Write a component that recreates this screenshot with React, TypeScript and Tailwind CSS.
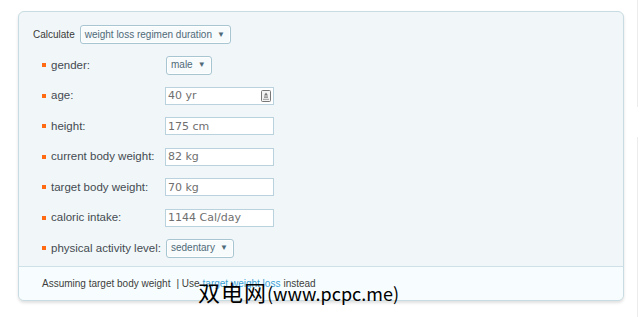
import { ReactNode } from "react";

const rows: { label: string; field: ReactNode }[] = [
  { label: "gender:", field: <Select value="male" /> },
  { label: "age:", field: <Input value="40 yr" spinner /> },
  { label: "height:", field: <Input value="175 cm" /> },
  { label: "current body weight:", field: <Input value="82 kg" /> },
  { label: "target body weight:", field: <Input value="70 kg" /> },
  { label: "caloric intake:", field: <Input value="1144 Cal/day" /> },
  { label: "physical activity level:", field: <Select value="sedentary" /> },
];

function Select({ value }: { value: string }) {
  return (
    <div className="ml-[1px] inline-flex h-[19px] items-center gap-[5px] rounded-[3px] border border-[#a8c5d2] bg-[#f8fbfc] pl-[4px] pr-[5px] text-[10px] leading-none text-[#4f6a78] shadow-[inset_0_0_0_1px_#ffffff]">
      <span>{value}</span>
      <span className="text-[8px] text-[#4f6a78]">▼</span>
    </div>
  );
}

function Input({ value, spinner }: { value: string; spinner?: boolean }) {
  return (
    <div className="flex h-[18px] w-[109px] items-center justify-between border border-[#b9d2dd] bg-white pl-[2px] pr-[2px] font-['DejaVu_Sans',sans-serif] text-[11px] leading-none text-[#6f6f6f]">
      <span>{value}</span>
      {spinner && (
        <svg width="10" height="12" viewBox="0 0 10 12">
          <rect x="0.5" y="0.5" width="9" height="11" rx="1" fill="#f3f3f3" stroke="#777" />
          <path d="M5 2.5 L7 5.5 H3 Z" fill="#777" />
          <rect x="3" y="6.5" width="4" height="1.2" fill="#777" />
          <rect x="2" y="8.8" width="6" height="1" fill="#999" />
        </svg>
      )}
    </div>
  );
}

export default function App() {
  return (
    <div className="relative flex h-[317px] w-[640px] bg-white font-['Liberation_Sans',Arial,sans-serif]">
      <div className="w-[637px] pl-[18px] pt-[11px]">
        <div className="flex h-[290px] w-[606px] flex-col overflow-hidden rounded-[6px] border border-[#c8dce3] bg-[#f1f7f8] shadow-[0_2px_3px_rgba(0,0,0,0.12)]">
          <div className="flex-1 pl-[14px] pt-[7px]">
            <div className="flex h-[31px] items-center gap-[4px]">
              <span className="text-[10px] text-[#3a3a3a]">Calculate</span>
              <Select value="weight loss regimen duration" />
            </div>
            {rows.map((r) => (
              <div key={r.label} className="flex h-[30.5px] items-center pl-[9px]">
                <div className="flex w-[123px] items-center gap-[5px]">
                  <span className="h-[4px] w-[4px] bg-[#ff6a13]" />
                  <span className="text-[11.5px] text-[#444a52]">{r.label}</span>
                </div>
                {r.field}
              </div>
            ))}
          </div>
          <div className="flex h-[34px] items-center border-t border-[#cfe1e7] bg-[#f7fdfe] pl-[23px] text-[10px] text-[#3d3d3d]">
            <span>Assuming target body weight</span>
            <span className="ml-[6px]">| Use </span>
            <span className="ml-[3px] text-[#3a9fd6]">target weight loss</span>
            <span className="ml-[3px]">instead</span>
          </div>
        </div>
      </div>
      <div className="flex w-[3px] flex-col">
        <div className="h-[107px] border-l border-[#ececec]" />
        <div className="mt-[30px] flex-1 border-l border-[#ececec]" />
      </div>
      <div className="absolute left-[198px] top-[276px] flex items-baseline font-['Noto_Sans_CJK_SC',sans-serif] leading-[30px] text-black">
        <span className="text-[22px] tracking-[1px]">双电网</span>
        <span className="text-[18px]">(www.pcpc.me)</span>
      </div>
    </div>
  );
}
